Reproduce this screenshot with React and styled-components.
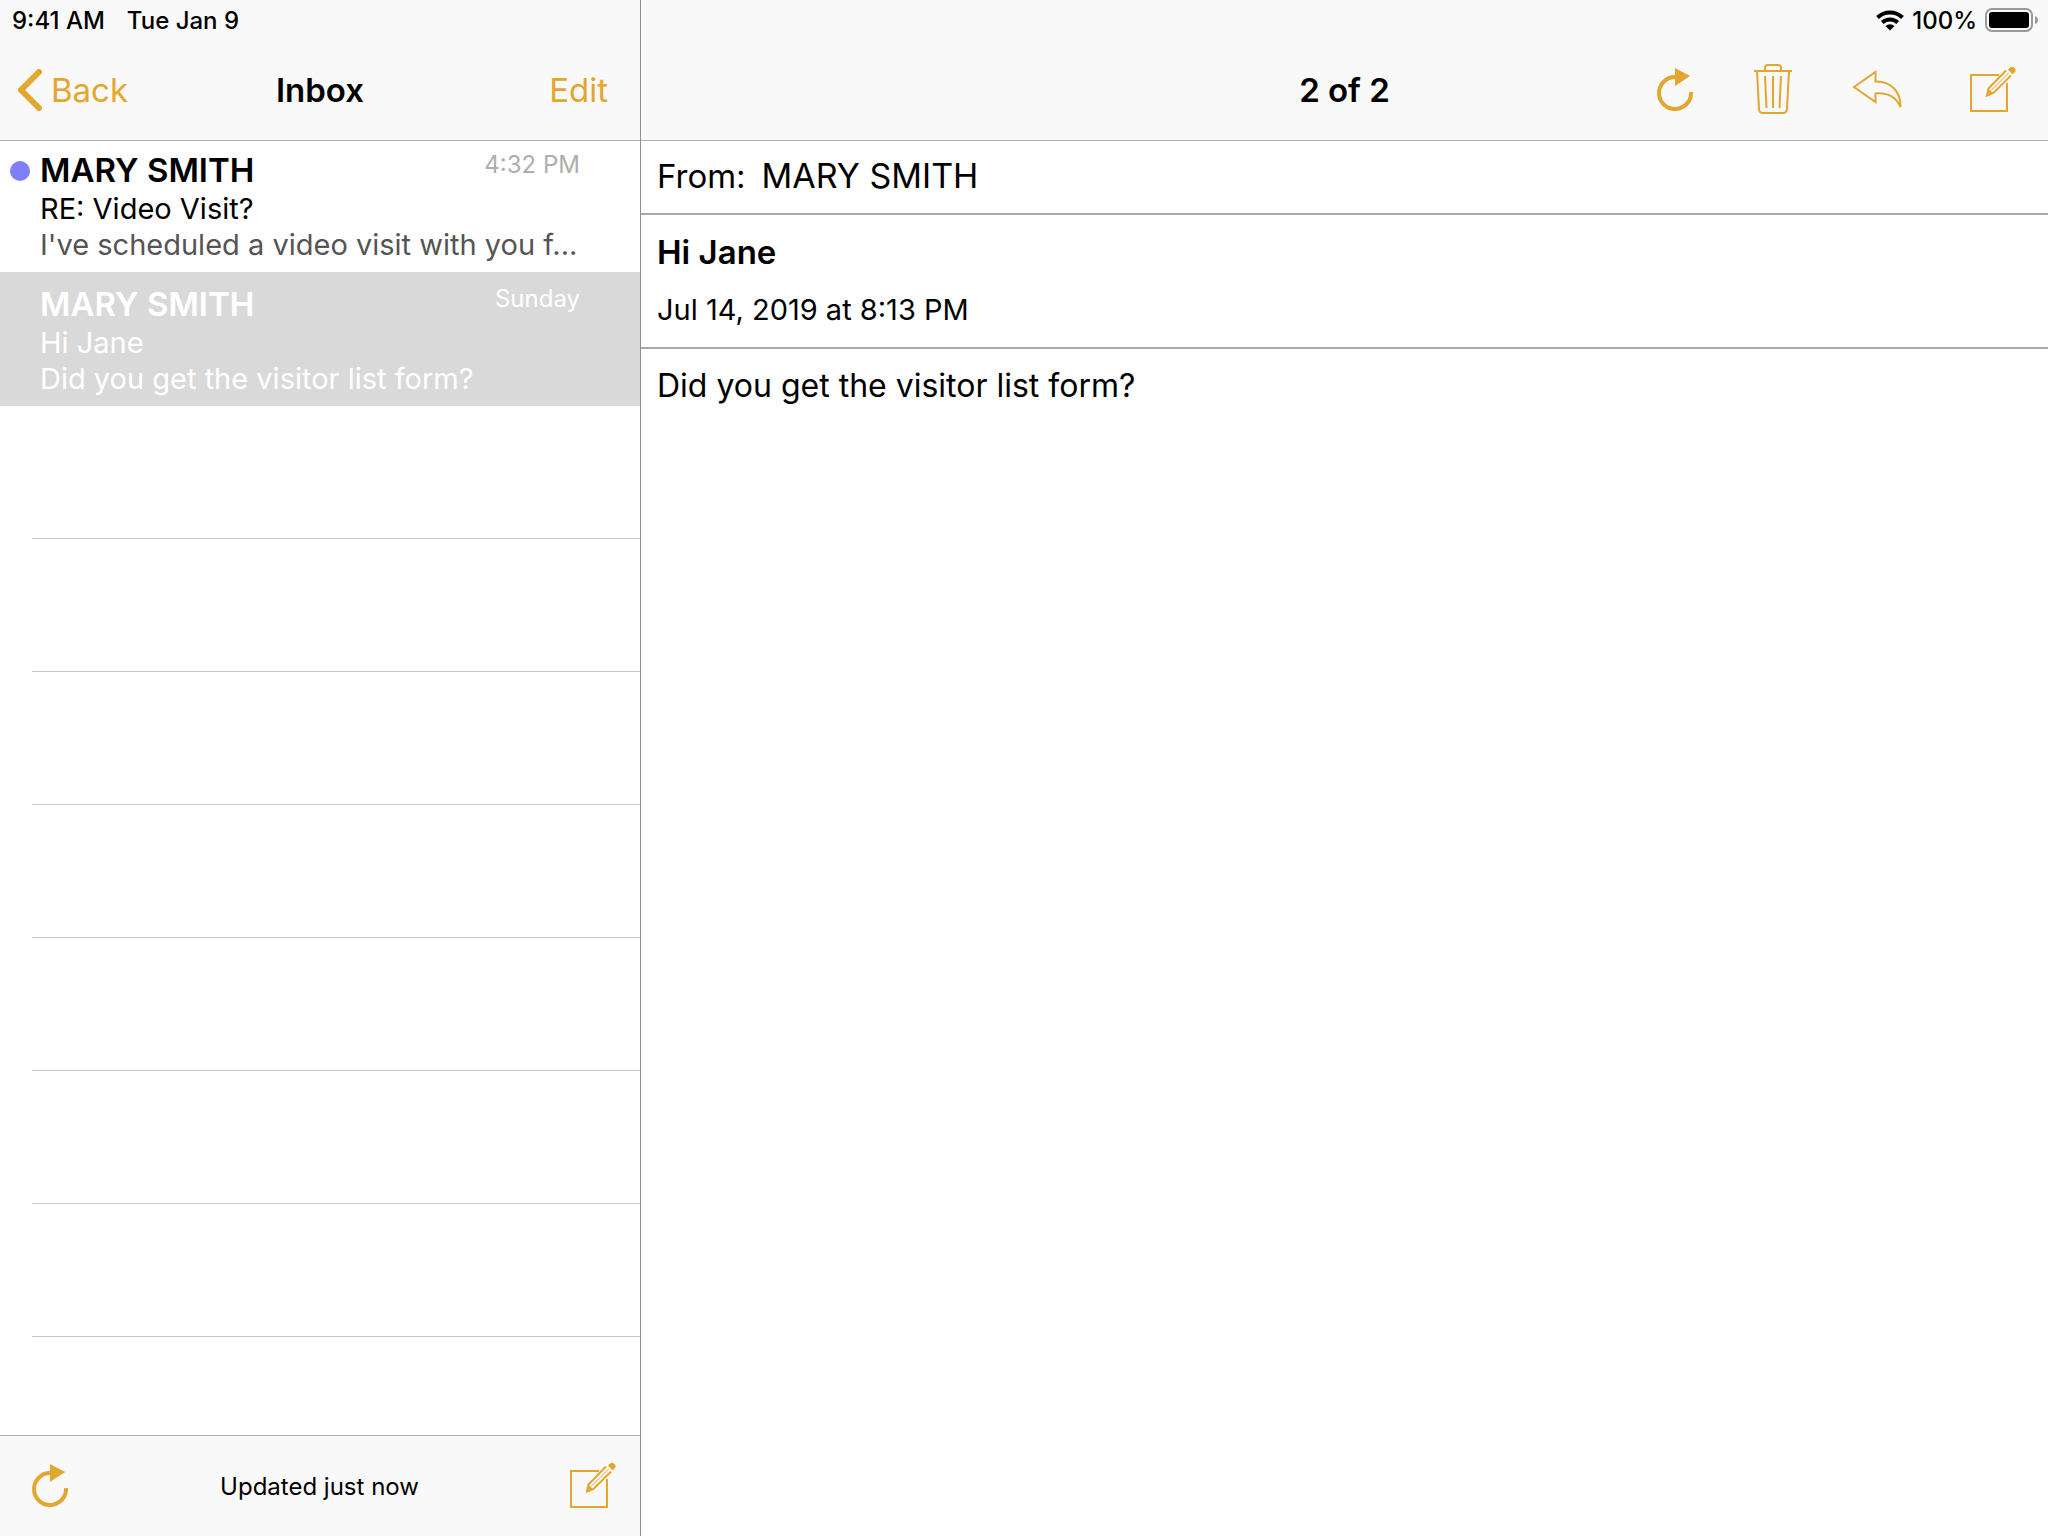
import styled, { createGlobalStyle } from "styled-components";

const GlobalStyle = createGlobalStyle`
    * {
        box-sizing: border-box;
    }
    body {
        margin: 0;
        background-color: #FFFFFF;
        color: #000000;
        font-family: Inter, "Liberation Sans", sans-serif;
    }
    h1, h2, p, ul {
        margin: 0;
        padding: 0;
    }
`

const Screen = styled.div`
    display: flex;
    min-height: 100vh;
`

const Sidebar = styled.aside`
    display: flex;
    flex-direction: column;
    flex: 0 0 641px;
    min-width: 0;
    border-right: 1px solid #8E8E93;
`

const Detail = styled.main`
    display: flex;
    flex-direction: column;
    flex: 1;
    min-width: 0;
`

const Header = styled.header`
    background-color: #F9F9F9;
    border-bottom: 1px solid #B2B2B2;
`

const StatusBar = styled.div`
    display: flex;
    align-items: center;
    justify-content: ${(props) => (props.$end ? "flex-end" : "flex-start")};
    gap: ${(props) => (props.$end ? "8px" : "22px")};
    height: 40px;
    padding: 0 9px 0 12px;
    font-size: 24px;
    font-weight: 500;
`

const NavBar = styled.nav`
    display: grid;
    grid-template-columns: 1fr auto 1fr;
    align-items: center;
    height: 100px;
    padding: ${(props) => (props.$wide ? "0 30px" : "0 32px")};
`

const Title = styled.h1`
    font-size: 33px;
    line-height: 40px;
    font-weight: 600;
`

const TextButton = styled.button`
    display: flex;
    align-items: center;
    justify-self: ${(props) => (props.$back ? "start" : "end")};
    gap: 9px;
    margin-left: ${(props) => (props.$back ? "-16px" : "0")};
    padding: 0;
    border: 0;
    background: none;
    color: #E3A62F;
    font-family: inherit;
    font-size: 33px;
    line-height: 40px;
    cursor: pointer;
`

const IconButton = styled.button`
    display: flex;
    padding: 0;
    border: 0;
    background: none;
    color: #E3A62F;
    cursor: pointer;
`

const Actions = styled.div`
    display: flex;
    align-items: center;
    justify-self: end;
    gap: 60px;
    & button:last-child {
        margin-left: 8px;
    }
`

const MailList = styled.ul`
    flex: 1;
    list-style: none;
`

const MailItem = styled.li`
    display: flex;
    height: 134px;
    padding-bottom: 9px;
    align-items: flex-end;
    background-color: ${(props) => (props.$selected ? "#D9D9D9" : "transparent")};
    color: ${(props) => (props.$selected ? "#FFFFFF" : "#000000")};
    &:first-child {
        height: 131px;
    }
`

const EmptyItem = styled.li`
    height: 133px;
    margin-left: 32px;
    border-bottom: 1px solid #C8C7CC;
    &:last-child {
        height: 98px;
        border-bottom: 0;
    }
`

const Marker = styled.div`
    display: flex;
    justify-content: center;
    align-self: stretch;
    width: 40px;
    padding-top: 20px;
`

const Dot = styled.span`
    width: 20px;
    height: 20px;
    border-radius: 50%;
    background-color: #7F7FFB;
`

const MailText = styled.div`
    flex: 1;
    min-width: 0;
    padding-right: 60px;
`

const MailTop = styled.div`
    display: flex;
    align-items: flex-start;
    justify-content: space-between;
`

const Sender = styled.h2`
    font-size: 33px;
    line-height: 42px;
    font-weight: 600;
`

const Time = styled.time`
    font-size: 24px;
    line-height: 32px;
    color: ${(props) => (props.$selected ? "#FFFFFF" : "#AEAEAE")};
`

const MailLine = styled.p`
    overflow: hidden;
    text-overflow: ellipsis;
    white-space: nowrap;
    font-size: 29px;
    line-height: 36px;
    color: ${(props) => (props.$muted ? "#555555" : "inherit")};
`

const Footer = styled.footer`
    display: flex;
    align-items: center;
    justify-content: space-between;
    height: 101px;
    padding: 0 22px 0 31px;
    background-color: #F9F9F9;
    border-top: 1px solid #B2B2B2;
    font-size: 24px;
`

const Section = styled.section`
    display: flex;
    flex-direction: column;
    padding: ${(props) => props.$pad};
    border-bottom: ${(props) => (props.$line ? "2px solid #A9A9A9" : "0")};
`

const From = styled.p`
    display: flex;
    align-items: baseline;
    gap: 16px;
    font-size: 33px;
    line-height: 40px;
`

const FromName = styled.span`
    font-size: 34px;
`

const Subject = styled.h2`
    font-size: 33px;
    line-height: 40px;
    font-weight: 600;
`

const DateLine = styled.p`
    margin-top: 20px;
    font-size: 29px;
    line-height: 36px;
`

const Body = styled.p`
    font-size: 32px;
    line-height: 40px;
`

const BackIcon = () => (
    <svg width="26" height="42" viewBox="0 0 26 42" fill="none" stroke="currentColor" strokeWidth="6" strokeLinecap="round" strokeLinejoin="round">
        <path d="M23 3L5 21L23 39" />
    </svg>
)

const RefreshIcon = () => (
    <svg width="38" height="44" viewBox="0 0 38 44" fill="none">
        <path d="M19 9A16 16 0 1 0 35 24" stroke="currentColor" strokeWidth="4" />
        <path d="M19 0L34 8L19 18Z" fill="currentColor" />
    </svg>
)

const TrashIcon = () => (
    <svg width="38" height="52" viewBox="0 0 38 52" fill="none" stroke="currentColor" strokeWidth="2">
        <path d="M0 7H38M11 7V4Q11 1 14 1H24Q27 1 27 4V7" />
        <path d="M3 7L5 45Q5.200 49 9 49H29Q32.800 49 33 45L35 7M11 12L12.500 44M19 12V44M27 12L25.500 44" />
    </svg>
)

const ReplyIcon = () => (
    <svg width="50" height="40" viewBox="0 0 50 40" fill="none" stroke="currentColor" strokeWidth="2">
        <path d="M2 17L23.500 2V11.500C38 11 49 21 48.500 37C44 27 36 22.500 23.500 23.500V32Z" />
    </svg>
)

const ComposeIcon = () => (
    <svg width="48" height="48" viewBox="0 0 48 48" fill="none" stroke="currentColor" strokeWidth="2">
        <path d="M29 9H1V45H37V17" />
        <path d="M36 4.500L18.500 22.500L17 29.500L23.500 27L41 9.500" />
        <path d="M38.500 7L21 24.500" strokeWidth="1" />
        <path d="M38.500 3.500L40.500 1.500Q42.500 0.500 44.500 2.500Q46 4.500 44.500 6L42.500 8Z" fill="currentColor" strokeWidth="1" />
        <path d="M16 31L18 22.500L23.500 27.500Z" fill="currentColor" stroke="none" />
    </svg>
)

const WifiIcon = () => (
    <svg width="28" height="21" viewBox="0 0 28 21" fill="none" stroke="#000000" strokeWidth="4">
        <path d="M1.500 7.500A18 18 0 0 1 26.500 7.500" />
        <path d="M6.300 12.500A11.300 11.300 0 0 1 21.700 12.500" />
        <path d="M14 20.500L9.500 16A6.500 6.500 0 0 1 18.500 16Z" fill="#000000" stroke="none" />
    </svg>
)

const BatteryIcon = () => (
    <svg width="54" height="24" viewBox="0 0 54 24">
        <rect x="1" y="1" width="46" height="22" rx="6" fill="none" stroke="#9A9A9A" strokeWidth="2" />
        <rect x="4" y="4" width="40" height="16" rx="3" fill="#000000" />
        <path d="M50 8Q53 9 53 12Q53 15 50 16Z" fill="#9A9A9A" />
    </svg>
)

const mails = [
    { sender: "MARY SMITH", time: "4:32 PM", subject: "RE: Video Visit?", preview: "I've scheduled a video visit with you f...", unread: true },
    { sender: "MARY SMITH", time: "Sunday", subject: "Hi Jane", preview: "Did you get the visitor list form?", selected: true },
]

const emptyRows = [1, 2, 3, 4, 5, 6, 7, 8]

const App = () => {
    return (
        <Screen>
            <GlobalStyle />
            <Sidebar>
                <Header>
                    <StatusBar>
                        <span>9:41 AM</span>
                        <span>Tue Jan 9</span>
                    </StatusBar>
                    <NavBar>
                        <TextButton $back><BackIcon />Back</TextButton>
                        <Title>Inbox</Title>
                        <TextButton>Edit</TextButton>
                    </NavBar>
                </Header>
                <MailList>
                    {mails.map((mail) => (
                        <MailItem key={mail.time} $selected={mail.selected}>
                            <Marker>{mail.unread && <Dot />}</Marker>
                            <MailText>
                                <MailTop>
                                    <Sender>{mail.sender}</Sender>
                                    <Time $selected={mail.selected}>{mail.time}</Time>
                                </MailTop>
                                <MailLine>{mail.subject}</MailLine>
                                <MailLine $muted={!mail.selected}>{mail.preview}</MailLine>
                            </MailText>
                        </MailItem>
                    ))}
                    {emptyRows.map((row) => (
                        <EmptyItem key={row} />
                    ))}
                </MailList>
                <Footer>
                    <IconButton aria-label="Refresh inbox"><RefreshIcon /></IconButton>
                    <p>Updated just now</p>
                    <IconButton aria-label="New message"><ComposeIcon /></IconButton>
                </Footer>
            </Sidebar>
            <Detail>
                <Header>
                    <StatusBar $end>
                        <WifiIcon />
                        <span>100%</span>
                        <BatteryIcon />
                    </StatusBar>
                    <NavBar $wide>
                        <span />
                        <Title>2 of 2</Title>
                        <Actions>
                            <IconButton aria-label="Refresh"><RefreshIcon /></IconButton>
                            <IconButton aria-label="Delete"><TrashIcon /></IconButton>
                            <IconButton aria-label="Reply"><ReplyIcon /></IconButton>
                            <IconButton aria-label="Compose"><ComposeIcon /></IconButton>
                        </Actions>
                    </NavBar>
                </Header>
                <Section $line $pad="15px 16px 17px">
                    <From><span>From:</span><FromName>MARY SMITH</FromName></From>
                </Section>
                <Section $line $pad="17px 16px 19px">
                    <Subject>Hi Jane</Subject>
                    <DateLine>Jul 14, 2019 at 8:13 PM</DateLine>
                </Section>
                <Section $pad="17px 16px">
                    <Body>Did you get the visitor list form?</Body>
                </Section>
            </Detail>
        </Screen>
    );
}

export default App;
